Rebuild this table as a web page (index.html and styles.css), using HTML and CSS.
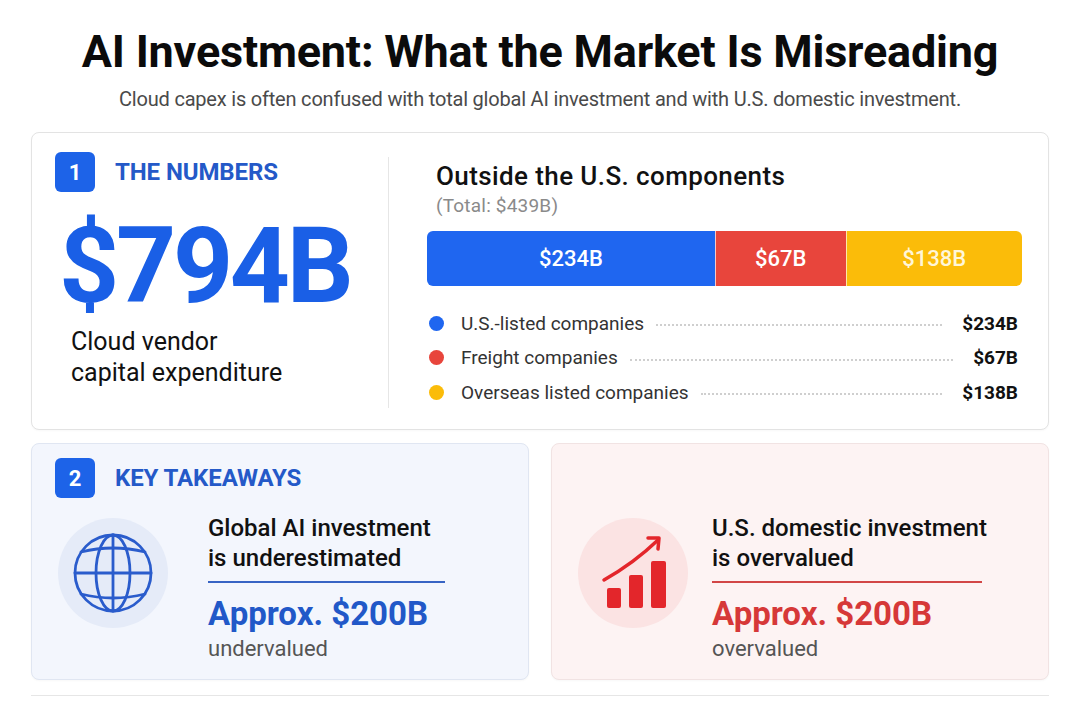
FILE: index.html
```html
<!DOCTYPE html>
<html lang="en">
<head>
<meta charset="utf-8">
<title>AI Investment</title>
<link rel="stylesheet" href="styles.css">
</head>
<body>
<div class="page">
  <h1 class="title">AI Investment: What the Market Is Misreading</h1>
  <p class="subtitle">Cloud capex is often confused with total global AI investment and with U.S. domestic investment.</p>

  <section class="card card-numbers">
    <div class="numbers-left">
      <div class="section-head"><span class="badge">1</span><span class="section-title">THE NUMBERS</span></div>
      <div class="big-number">$794B</div>
      <div class="big-caption">Cloud vendor<br>capital expenditure</div>
    </div>
    <div class="vdivider"></div>
    <div class="numbers-right">
      <h2 class="comp-title">Outside the U.S. components</h2>
      <div class="comp-total">(Total: $439B)</div>
      <div class="stack-bar">
        <div class="seg seg-blue" style="flex: 289">$234B</div>
        <div class="seg seg-red" style="flex: 130">$67B</div>
        <div class="seg seg-yellow" style="flex: 176">$138B</div>
      </div>
      <ul class="legend">
        <li class="legend-row"><span class="dot dot-blue"></span><span class="legend-label">U.S.-listed companies</span><span class="leader"></span><span class="legend-value">$234B</span></li>
        <li class="legend-row"><span class="dot dot-red"></span><span class="legend-label">Freight companies</span><span class="leader"></span><span class="legend-value">$67B</span></li>
        <li class="legend-row"><span class="dot dot-yellow"></span><span class="legend-label">Overseas listed companies</span><span class="leader"></span><span class="legend-value">$138B</span></li>
      </ul>
    </div>
  </section>

  <div class="takeaways">
    <section class="card take take-blue">
      <div class="section-head"><span class="badge">2</span><span class="section-title">KEY TAKEAWAYS</span></div>
      <div class="take-body">
        <div class="icon-circle icon-circle-blue">
          <svg class="icon-svg" viewBox="0 0 110 110" width="110" height="110" fill="none" stroke="#2a5ccc" stroke-width="2.8" stroke-linecap="round">
            <circle cx="55" cy="55" r="38"/>
            <ellipse cx="55" cy="55" rx="17" ry="38"/>
            <line x1="55" y1="17" x2="55" y2="93"/>
            <line x1="17" y1="55" x2="93" y2="55"/>
            <path d="M23 34 Q55 26 87 34"/>
            <path d="M23 76 Q55 84 87 76"/>
          </svg>
        </div>
        <div class="take-text take-text-blue">
          <h3 class="take-title">Global AI investment<br>is underestimated</h3>
          <div class="take-rule rule-blue"></div>
          <div class="take-amount amount-blue">Approx. $200B</div>
          <div class="take-note">undervalued</div>
        </div>
      </div>
    </section>

    <section class="card take take-red">
      <div class="take-body">
        <div class="icon-circle icon-circle-red">
          <svg class="icon-svg" viewBox="0 0 110 110" width="110" height="110">
            <rect x="29" y="70" width="14" height="20" rx="2" fill="#e3262b"/>
            <rect x="51" y="57" width="14" height="33" rx="2" fill="#e3262b"/>
            <rect x="73" y="43" width="15" height="47" rx="2" fill="#e3262b"/>
            <path d="M26 62 Q56 45 80 22" fill="none" stroke="#e3262b" stroke-width="3.5" stroke-linecap="round"/>
            <path d="M70 20 L81 20 L80 31" fill="none" stroke="#e3262b" stroke-width="3.5" stroke-linecap="round" stroke-linejoin="round"/>
          </svg>
        </div>
        <div class="take-text take-text-red">
          <h3 class="take-title">U.S. domestic investment<br>is overvalued</h3>
          <div class="take-rule rule-red"></div>
          <div class="take-amount amount-red">Approx. $200B</div>
          <div class="take-note">overvalued</div>
        </div>
      </div>
    </section>
  </div>

  <div class="bottom-rule"></div>
</div>
</body>
</html>
```

FILE: styles.css
```css
* { box-sizing: border-box; }

body {
  margin: 0;
  background: #ffffff;
  font-family: Roboto, "Liberation Sans", Arial, sans-serif;
  color: #111;
}

.page {
  padding: 0 31px;
}

.title {
  margin: 25px 0 0;
  font-size: 45px;
  line-height: 53px;
  font-weight: 700;
  letter-spacing: -0.2px;
  text-align: center;
  color: #0b0b0b;
}

.subtitle {
  margin: 9px 0 0;
  font-size: 20px;
  line-height: 24px;
  text-align: center;
  color: #4a4a4a;
  letter-spacing: -0.2px;
}

.card {
  border: 1px solid #e3e3e3;
  border-radius: 8px;
  background: #fff;
  box-shadow: 0 1px 2px rgba(0,0,0,0.03);
}

.card-numbers {
  margin-top: 21px;
  height: 298px;
  display: flex;
}

.numbers-left {
  width: 356px;
  padding: 19px 0 0 23px;
}

.section-head {
  display: flex;
  align-items: center;
  gap: 20px;
}

.badge {
  width: 40px;
  height: 40px;
  border-radius: 6px;
  background: #1d63e8;
  color: #fff;
  font-size: 22px;
  font-weight: 700;
  display: flex;
  align-items: center;
  justify-content: center;
}

.section-title {
  font-size: 24px;
  font-weight: 700;
  color: #2459c8;
  letter-spacing: -0.1px;
}

.big-number {
  margin-top: 22px;
  margin-left: 4px;
  font-size: 105px;
  line-height: 105px;
  font-weight: 700;
  color: #1a5fe6;
  letter-spacing: -3.3px;
}

.big-caption {
  margin-top: 7px;
  margin-left: 16px;
  font-size: 25px;
  line-height: 31px;
  color: #111;
}

.vdivider {
  width: 1px;
  background: #e6e6e6;
  margin: 24px 0 21px;
}

.numbers-right {
  flex: 1;
  padding: 28px 26px 0 38px;
}

.comp-title {
  margin: 0;
  padding-left: 9px;
  font-size: 26px;
  line-height: 30px;
  font-weight: 500;
  letter-spacing: 0.4px;
  color: #111;
}

.comp-total {
  margin-top: 4px;
  padding-left: 9px;
  font-size: 19px;
  line-height: 22px;
  letter-spacing: 0.2px;
  color: #8a8a8a;
}

.stack-bar {
  margin-top: 14px;
  height: 55px;
  display: flex;
  border-radius: 6px;
  overflow: hidden;
}

.seg {
  display: flex;
  align-items: center;
  justify-content: center;
  font-size: 22px;
  font-weight: 500;
  color: #fff;
}

.seg-blue { background: #1f66f0; }
.seg-red { background: #e8453c; border-left: 1px solid #f6c9c6; }
.seg-yellow { background: #fbbc09; color: #fff6d8; border-left: 1px solid #fde7a8; }

.legend {
  list-style: none;
  margin: 20px 0 0;
  padding: 0 4px 0 2px;
}

.legend-row {
  display: flex;
  align-items: center;
  height: 34.5px;
}

.dot {
  width: 15px;
  height: 15px;
  border-radius: 50%;
  flex: none;
  margin-right: 17px;
}

.dot-blue { background: #1f66f0; }
.dot-red { background: #e8453c; }
.dot-yellow { background: #fbbc09; }

.legend-label {
  font-size: 19px;
  color: #333;
}

.leader {
  flex: 1;
  height: 0;
  border-bottom: 2px dotted #cfcfcf;
  margin: 4px 20px 0 12px;
}

.legend-value {
  font-size: 19px;
  font-weight: 700;
  color: #111;
}

.takeaways {
  margin-top: 13px;
  display: grid;
  grid-template-columns: 1fr 1fr;
  gap: 22px;
}

.take {
  height: 237px;
  padding: 14px 23px;
}

.take-blue {
  background: #f3f6fd;
  border-color: #e0e6f2;
}

.take-red {
  background: #fdf3f3;
  border-color: #f1e3e3;
  padding-top: 69px;
}

.take-body {
  display: flex;
  align-items: flex-start;
  margin-left: 3px;
}

.take-blue .take-body {
  margin-top: 15px;
}

.icon-circle {
  width: 110px;
  height: 110px;
  border-radius: 50%;
  flex: none;
  margin-top: 5px;
}

.icon-circle-blue { background: #e5ebf8; }
.icon-circle-red { background: #fbe3e3; }

.icon-svg { display: block; }

.take-text-blue { margin-left: 40px; }
.take-text-red { margin-left: 24px; }

.take-title {
  margin: 0;
  font-size: 24px;
  line-height: 30px;
  font-weight: 500;
  color: #111;
}

.take-rule {
  margin-top: 8px;
  height: 2px;
}

.rule-blue { width: 237px; background: #3764c4; }
.rule-red { width: 270px; background: #d24646; }

.take-amount {
  margin-top: 12px;
  font-size: 33px;
  line-height: 38px;
  font-weight: 700;
  letter-spacing: 0;
}

.amount-blue { color: #2158c8; }
.amount-red { color: #d63838; }

.take-note {
  margin-top: 2px;
  font-size: 22px;
  line-height: 28px;
  color: #555;
}

.bottom-rule {
  margin-top: 15px;
  height: 1px;
  background: #e6e6e6;
}
```
